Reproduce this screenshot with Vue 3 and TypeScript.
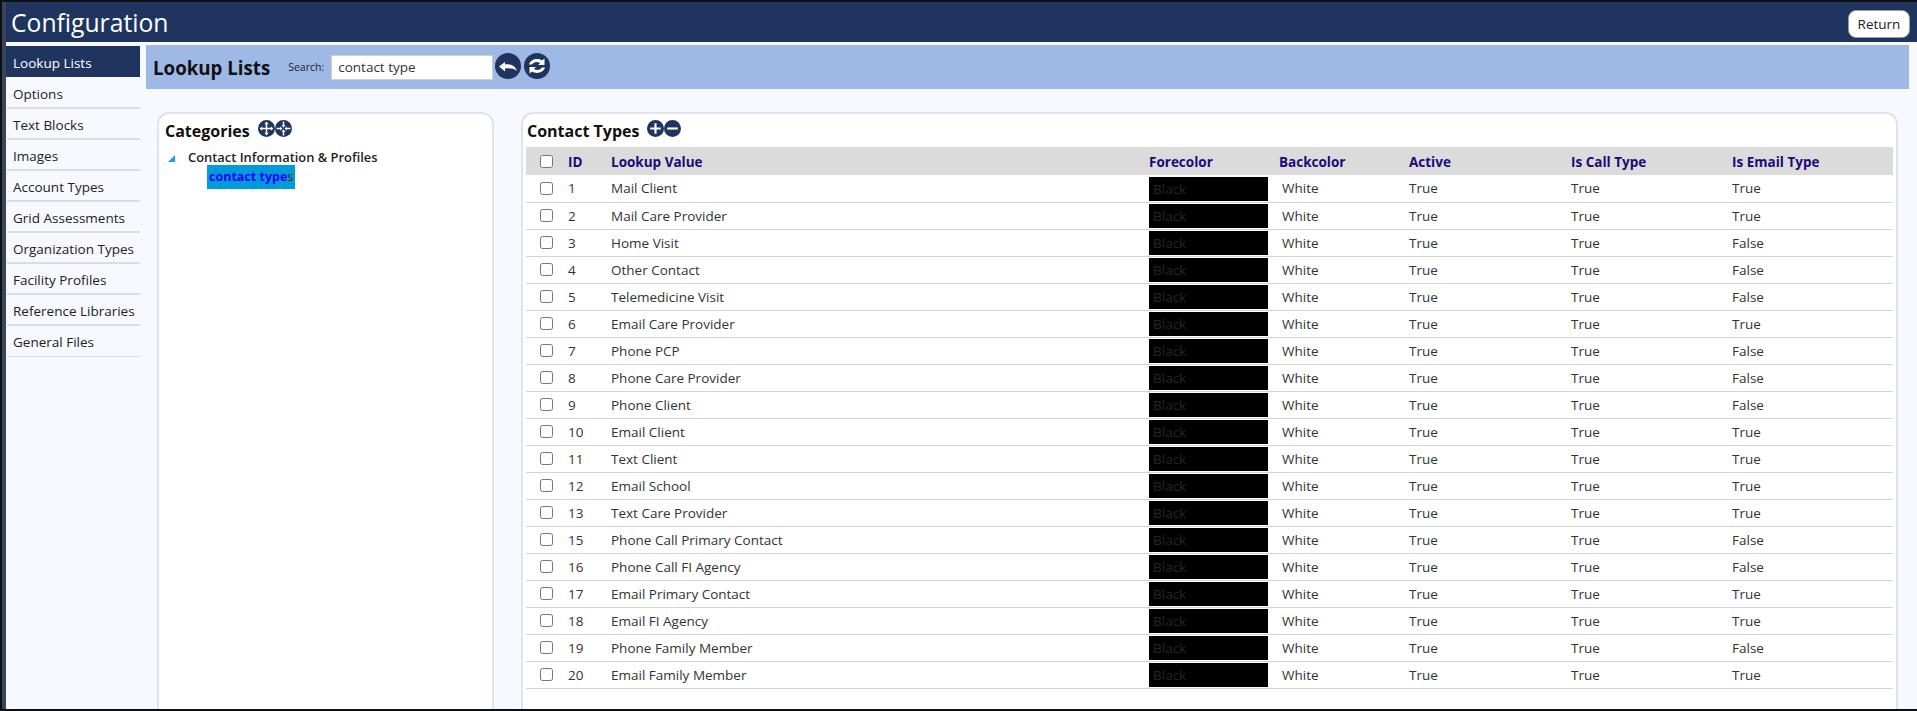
<script setup lang="ts">
interface ContactType {
  id: number
  value: string
  call: string
  email: string
}

const navItems = [
  'Lookup Lists',
  'Options',
  'Text Blocks',
  'Images',
  'Account Types',
  'Grid Assessments',
  'Organization Types',
  'Facility Profiles',
  'Reference Libraries',
  'General Files',
]

const rows: ContactType[] = [
  { id: 1, value: 'Mail Client', call: 'True', email: 'True' },
  { id: 2, value: 'Mail Care Provider', call: 'True', email: 'True' },
  { id: 3, value: 'Home Visit', call: 'True', email: 'False' },
  { id: 4, value: 'Other Contact', call: 'True', email: 'False' },
  { id: 5, value: 'Telemedicine Visit', call: 'True', email: 'False' },
  { id: 6, value: 'Email Care Provider', call: 'True', email: 'True' },
  { id: 7, value: 'Phone PCP', call: 'True', email: 'False' },
  { id: 8, value: 'Phone Care Provider', call: 'True', email: 'False' },
  { id: 9, value: 'Phone Client', call: 'True', email: 'False' },
  { id: 10, value: 'Email Client', call: 'True', email: 'True' },
  { id: 11, value: 'Text Client', call: 'True', email: 'True' },
  { id: 12, value: 'Email School', call: 'True', email: 'True' },
  { id: 13, value: 'Text Care Provider', call: 'True', email: 'True' },
  { id: 15, value: 'Phone Call Primary Contact', call: 'True', email: 'False' },
  { id: 16, value: 'Phone Call FI Agency', call: 'True', email: 'False' },
  { id: 17, value: 'Email Primary Contact', call: 'True', email: 'True' },
  { id: 18, value: 'Email FI Agency', call: 'True', email: 'True' },
  { id: 19, value: 'Phone Family Member', call: 'True', email: 'False' },
  { id: 20, value: 'Email Family Member', call: 'True', email: 'True' },
]
</script>

<template>
  <div class="frame">
    <header class="topbar">
      <h1 class="topbar__title">Configuration</h1>
      <button type="button" class="topbar__return">Return</button>
    </header>

    <div class="body">
      <nav class="nav">
        <a
          v-for="(item, i) in navItems"
          :key="item"
          class="nav__item"
          :class="{ 'nav__item--active': i === 0 }"
        >{{ item }}</a>
      </nav>

      <main class="main">
        <div class="toolbar">
          <h2 class="toolbar__title">Lookup Lists</h2>
          <label class="toolbar__label" for="search">Search:</label>
          <input id="search" class="toolbar__input" type="text" value="contact type" />
          <div class="toolbar__icons">
            <svg class="icon icon--lg" viewBox="0 0 26 26">
              <circle cx="13" cy="13" r="13" fill="#1f3560" />
              <path d="M4 13.5 10 9V11.5C15 10.5 20 12.5 22 18 19 15.5 15 15 10 15.5V18.5Z" fill="#fff" />
            </svg>
            <svg class="icon icon--lg" viewBox="0 0 26 26">
              <circle cx="13" cy="13" r="13" fill="#1f3560" />
              <path d="M5 11.5C6.5 6.5 13 4.5 18 7.5L20.5 5.5V12H14L16.2 10C13 8.2 9.5 9 8 11.5Z" fill="#fff" />
              <path d="M21 14.5C19.5 19.5 13 21.5 8 18.5L5.5 20.5V14H12L9.8 16C13 17.8 16.5 17 18 14.5Z" fill="#fff" />
            </svg>
          </div>
        </div>

        <div class="panels">
          <section class="card card--tree">
            <div class="card__head">
              <h3 class="card__title">Categories</h3>
              <div class="card__icons">
                <svg class="icon" viewBox="0 0 16 16">
                  <circle cx="8" cy="8" r="8" fill="#1f3560" />
                  <path d="M8 1.5 10 4H8.7V7.3H12V6L14.5 8 12 10V8.7H8.7V12H10L8 14.5 6 12H7.3V8.7H4V10L1.5 8 4 6V7.3H7.3V4H6Z" fill="#fff" />
                </svg>
                <svg class="icon" viewBox="0 0 16 16">
                  <circle cx="8" cy="8" r="8" fill="#1f3560" />
                  <path d="M8 7 6 5H7.3V1.5H8.7V5H10ZM8 9 10 11H8.7V14.5H7.3V11H6ZM7 8 5 10V8.7H1.5V7.3H5V6ZM9 8 11 6V7.3H14.5V8.7H11V10Z" fill="#fff" />
                </svg>
              </div>
            </div>
            <div class="tree">
              <div class="tree__parent">
                <svg class="tree__arrow" viewBox="0 0 7 7"><path d="M7 0V7H0Z" fill="#1ea0d8" /></svg>
                <span>Contact Information &amp; Profiles</span>
              </div>
              <div class="tree__child"><mark class="tree__match">contact type</mark>s</div>
            </div>
          </section>

          <section class="card card--grid">
            <div class="card__head card__head--grid">
              <h3 class="card__title">Contact Types</h3>
              <div class="card__icons">
                <svg class="icon" viewBox="0 0 16 16">
                  <circle cx="8" cy="8" r="8" fill="#1f3560" />
                  <path d="M7 3H9V7H13V9H9V13H7V9H3V7H7Z" fill="#fff" />
                </svg>
                <svg class="icon" viewBox="0 0 16 16">
                  <circle cx="8" cy="8" r="8" fill="#1f3560" />
                  <path d="M3 7H13V9H3Z" fill="#fff" />
                </svg>
              </div>
            </div>
            <table class="grid">
              <colgroup>
                <col class="grid__col-check" />
                <col class="grid__col-id" />
                <col class="grid__col-value" />
                <col class="grid__col-fore" />
                <col class="grid__col-back" />
                <col class="grid__col-active" />
                <col class="grid__col-call" />
                <col />
              </colgroup>
              <thead>
                <tr>
                  <th class="grid__check"><input type="checkbox" /></th>
                  <th>ID</th>
                  <th>Lookup Value</th>
                  <th>Forecolor</th>
                  <th>Backcolor</th>
                  <th>Active</th>
                  <th>Is Call Type</th>
                  <th>Is Email Type</th>
                </tr>
              </thead>
              <tbody>
                <tr v-for="row in rows" :key="row.id">
                  <td class="grid__check"><input type="checkbox" /></td>
                  <td>{{ row.id }}</td>
                  <td>{{ row.value }}</td>
                  <td class="grid__fore"><span class="swatch">Black</span></td>
                  <td class="grid__back">White</td>
                  <td>True</td>
                  <td>{{ row.call }}</td>
                  <td>{{ row.email }}</td>
                </tr>
              </tbody>
            </table>
          </section>
        </div>
      </main>
    </div>
  </div>
</template>

<style>
html,
body {
  margin: 0;
  background: #0c0f14;
  overflow: hidden;
}
</style>

<style scoped>
.frame {
  box-sizing: border-box;
  width: 1917px;
  height: 711px;
  display: flex;
  flex-direction: column;
  padding-left: 4px;
  border: solid #0c0f14;
  border-width: 2px 0 2px 2px;
  background: #39455a;
  font-family: 'Open Sans', 'Noto Sans', sans-serif;
  color: #222;
  overflow: hidden;
}

.topbar {
  flex: none;
  height: 40px;
  display: flex;
  align-items: center;
  justify-content: space-between;
  padding: 0 7px 0 5px;
  background: #1f3560;
}

.topbar__title {
  margin: 0;
  font-size: 24.7px;
  font-weight: 400;
  color: #fff;
}

.topbar__return {
  width: 62px;
  height: 28px;
  margin-top: 4px;
  padding: 0;
  border: 1px solid #999;
  border-radius: 8px;
  background: #fff;
  color: #222;
  font: 400 13.5px 'Open Sans', sans-serif;
}

.body {
  flex: 1;
  min-height: 0;
  display: flex;
  background: #f8f9ff;
}

.nav {
  flex: none;
  width: 134px;
  padding-top: 4px;
  margin-right: 6px;
}

.nav__item {
  box-sizing: border-box;
  display: block;
  height: 31px;
  margin-left: 1px;
  padding: 1px 6px 0;
  line-height: 30px;
  font-size: 13.5px;
  white-space: nowrap;
  color: #222;
  border-bottom: 2px solid #dcdde2;
}

.nav__item:last-child {
  border-bottom-width: 1px;
}

.nav__item--active {
  margin: 0 0 1px;
  padding: 2px 7px 0;
  background: #1f3560;
  color: #fff;
  border-bottom: none;
}

.main {
  flex: 1;
  min-width: 0;
  display: flex;
  flex-direction: column;
  padding-top: 3px;
  padding-right: 8px;
}

.toolbar {
  flex: none;
  height: 44px;
  display: flex;
  align-items: center;
  padding-left: 7px;
  background: #9fb9e7;
}

.toolbar__title {
  margin: 0 18px 0 0;
  font-size: 18.7px;
  font-weight: 700;
  color: #111;
}

.toolbar__label {
  margin-right: 7px;
  font-size: 10.5px;
  color: #222;
}

.toolbar__input {
  box-sizing: border-box;
  width: 162px;
  height: 25px;
  padding: 0 6px;
  border: 1px solid #cfcfcf;
  background: #fff;
  font: 400 13.5px 'Open Sans', sans-serif;
  color: #333;
}

.toolbar__icons {
  display: flex;
  gap: 3px;
  margin-left: 2px;
  margin-top: -2px;
}

.icon {
  display: block;
  width: 17px;
  height: 17px;
}

.icon--lg {
  width: 26px;
  height: 26px;
}

.panels {
  flex: 1;
  min-height: 0;
  display: flex;
  gap: 27px;
  padding: 23px 11px 0;
}

.card {
  box-sizing: border-box;
  background: #fff;
  border: 2px solid #dfe3f0;
  border-bottom: none;
  border-radius: 12px 12px 0 0;
}

.card--tree {
  flex: none;
  width: 337px;
  padding: 6px;
}

.card--grid {
  flex: 1;
  min-width: 0;
  padding: 6px 3px;
}

.card__head {
  display: flex;
  align-items: flex-start;
  gap: 8px;
  height: 27px;
}

.card__head--grid {
  padding-left: 1px;
}

.card__title {
  margin: 0;
  font-size: 16px;
  line-height: 22px;
  font-weight: 700;
  color: #111;
}

.card__icons {
  display: flex;
}

.tree {
  font-size: 12.9px;
  color: #222;
}

.tree__parent {
  display: flex;
  align-items: center;
  height: 20px;
  font-weight: 600;
}

.tree__arrow {
  width: 7px;
  height: 7px;
  margin: 2px 13px 0 3px;
}

.tree__child {
  display: inline-block;
  margin: -2px 0 0 42px;
  padding: 0 2px;
  height: 24px;
  line-height: 24px;
  font-size: 12.5px;
  background: #009bd9;
}

.tree__match {
  background: transparent;
  color: #2a00ff;
  font-weight: 700;
}

.grid {
  width: 100%;
  table-layout: fixed;
  border-collapse: collapse;
  font-size: 13.5px;
}

.grid__col-check {
  width: 36px;
}

.grid__col-id {
  width: 43px;
}

.grid__col-value {
  width: 538px;
}

.grid__col-fore {
  width: 130px;
}

.grid__col-back {
  width: 130px;
}

.grid__col-active {
  width: 162px;
}

.grid__col-call {
  width: 161px;
}

.grid th {
  box-sizing: border-box;
  height: 28px;
  padding: 1px 0 0 6px;
  background: #dbdbdb;
  color: #1b0a78;
  font-weight: 700;
  text-align: left;
}

.grid td {
  box-sizing: border-box;
  height: 27px;
  padding: 0 0 0 6px;
  border-bottom: 1px solid #d4d4d4;
  color: #333;
}

.grid input[type='checkbox'] {
  display: block;
  width: 13px;
  height: 13px;
  margin: 0;
}

.grid .grid__check {
  padding: 0 0 0 14px;
}

.grid .grid__fore {
  padding: 0;
}

.grid .grid__back {
  padding-left: 9px;
}

.swatch {
  box-sizing: border-box;
  display: block;
  width: 119px;
  height: 24px;
  margin: 1px 0 0 6px;
  padding-left: 4px;
  line-height: 24px;
  background: #000;
  color: #262626;
}
</style>
